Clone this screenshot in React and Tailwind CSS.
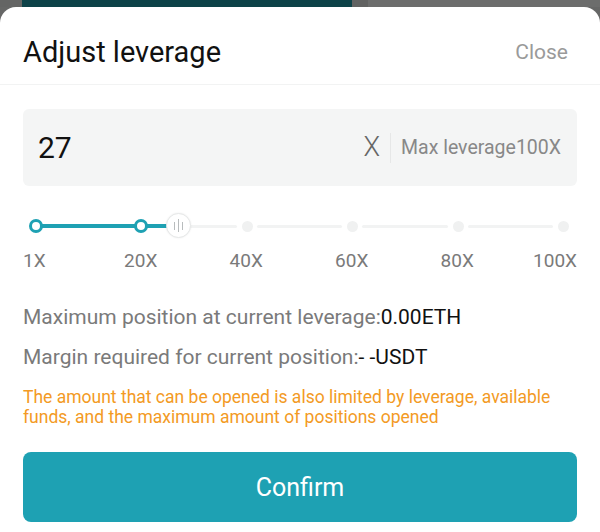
import React from "react";

const nodes = [
  { x: 36, label: "1X", active: true },
  { x: 141, label: "20X", active: true },
  { x: 247, label: "40X", active: false },
  { x: 352, label: "60X", active: false },
  { x: 458, label: "80X", active: false },
  { x: 563, label: "100X", active: false },
];

function Slider() {
  return (
    <div className="relative h-[30px] mx-[23px] mt-[25px]">
      {nodes.slice(0, -1).map((n, i) => (
        <div
          key={i}
          className="absolute top-[14px] h-[3px] bg-[#f2f3f3] rounded-full"
          style={{ left: n.x - 23 + 10, width: nodes[i + 1].x - n.x - 20 }}
        />
      ))}
      <div className="absolute top-[13px] h-[4px] bg-[#1ea1b3] left-[13px] w-[142px]" />
      {nodes.map((n, i) =>
        n.active ? (
          <div
            key={i}
            className="absolute top-[8px] w-[14px] h-[14px] rounded-full bg-white border-[3px] border-[#1ea1b3]"
            style={{ left: n.x - 23 - 7 }}
          />
        ) : (
          <div
            key={i}
            className="absolute top-[10px] w-[11px] h-[11px] rounded-full bg-[#f0f1f1]"
            style={{ left: n.x - 23 - 5.5 }}
          />
        )
      )}
      <div className="absolute top-[2px] left-[143px] w-[25px] h-[25px] rounded-full bg-white border border-[#e6e8e8] shadow-[0_0_2px_rgba(0,0,0,0.08)] flex items-center justify-center gap-[3px]">
        <div className="w-px h-[8px] bg-[#b8bcbd]" />
        <div className="w-px h-[13px] bg-[#b8bcbd]" />
        <div className="w-px h-[8px] bg-[#b8bcbd]" />
      </div>
    </div>
  );
}

export default function App() {
  return (
    <div
      className="w-[600px] h-[532px] bg-[#666766] flex flex-col overflow-hidden"
      style={{ fontFamily: 'Roboto, "Noto Sans", sans-serif' }}
    >
      <div className="h-[7px] flex shrink-0">
        <div className="w-[22px] bg-[#646564]" />
        <div className="w-[330px] bg-[#0d4248]" />
        <div className="w-[16px] bg-[#616261]" />
        <div className="flex-1 bg-[#6c6d6c]" />
      </div>
      <div className="flex-1 bg-white rounded-t-[16px] flex flex-col">
        <div className="h-[78px] flex items-center justify-between px-[23px] border-b border-[#f2f3f3] pt-[14px]">
          <span className="text-[29px] text-[#111] leading-none">Adjust leverage</span>
          <span className="text-[21px] text-[#9a9a9a] leading-none mr-[9px]">Close</span>
        </div>
        <div className="mx-[23px] mt-[24px] h-[77px] bg-[#f4f5f5] rounded-[6px] flex items-center pl-[15px] pr-[16px]">
          <span className="flex-1 text-[30px] text-[#111] leading-none">27</span>
          <span className="text-[27px] text-[#666] leading-none font-light">X</span>
          <div className="w-px h-[30px] bg-[#e6e7e7] ml-[10px] mr-[10px]" />
          <span className="text-[19.5px] text-[#888] leading-none">Max leverage100X</span>
        </div>
        <Slider />
        <div className="flex mx-[23px] mt-[10px] text-[19px] text-[#7a7a7a] leading-none">
          <span className="w-[65px]">1X</span>
          <span className="w-[105.5px] text-center">20X</span>
          <span className="w-[105.5px] text-center">40X</span>
          <span className="w-[105.5px] text-center">60X</span>
          <span className="w-[105.5px] text-center">80X</span>
          <span className="flex-1 text-right">100X</span>
        </div>
        <div className="mx-[23px] mt-[37px] text-[21px] leading-none text-[#7a7a7a]">
          Maximum position at current leverage:<span className="text-[#111]">0.00ETH</span>
        </div>
        <div className="mx-[23px] mt-[19px] text-[21px] leading-none text-[#7a7a7a]">
          Margin required for current position:<span className="text-[#111]">- -USDT</span>
        </div>
        <div className="mx-[23px] mt-[19px] text-[17.5px] leading-[20px] text-[#f39a24]">
          The amount that can be opened is also limited by leverage, available funds, and the maximum amount of positions opened
        </div>
        <button className="mx-[23px] mt-[25px] h-[70px] bg-[#1ea1b3] rounded-[8px] text-white text-[25px] leading-none">
          Confirm
        </button>
      </div>
    </div>
  );
}
